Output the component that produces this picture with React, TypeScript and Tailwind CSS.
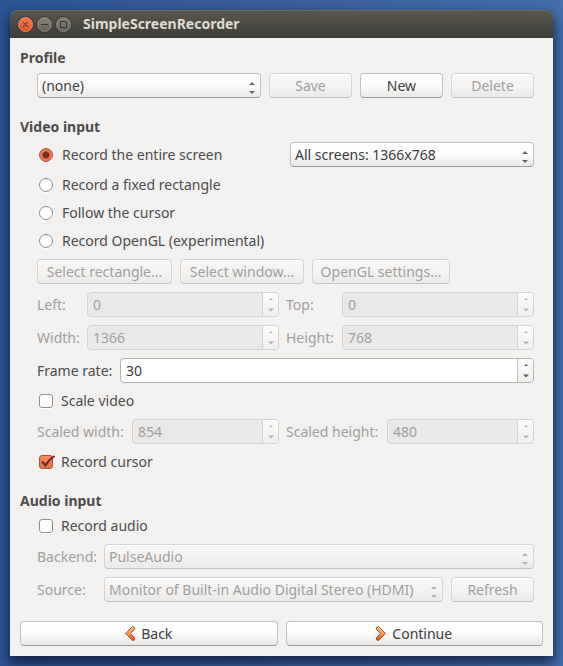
import React, { useId, useState } from "react";
import type { ReactNode } from "react";

function Arrows() {
  return (
    <svg width="8" height="14" viewBox="0 0 8 14" fill="currentColor" aria-hidden="true">
      <path d="M1 5L4 2L7 5Z" />
      <path d="M1 11L4 14L7 11Z" />
    </svg>
  );
}

const heading = "text-sm leading-5 font-bold text-[#4c4c4c]";

const raised =
  "h-[25px] rounded border border-[#c3c1be] border-b-[#9c9a97] bg-linear-to-b from-white via-[#fbfbfb] to-[#e9e8e6] text-[#3c3c3c] shadow-[inset_0_1px_0_#fff] disabled:border-[#d5d3d0] disabled:border-b-[#c4c2bf] disabled:from-[#f7f6f5] disabled:via-[#f4f3f2] disabled:to-[#eceae9] disabled:text-[#a09f9e]";

function Button({
  children,
  disabled,
  className = "",
}: {
  children: ReactNode;
  disabled?: boolean;
  className?: string;
}) {
  return (
    <button
      type="button"
      disabled={disabled}
      className={`${raised} flex shrink-0 items-center justify-center gap-1.5 whitespace-nowrap ${className}`}
    >
      {children}
    </button>
  );
}

function Combo({
  id,
  label,
  value,
  disabled,
  className = "",
}: {
  id?: string;
  label?: string;
  value: string;
  disabled?: boolean;
  className?: string;
}) {
  return (
    <div className={`relative min-w-0 ${className}`}>
      <select
        id={id}
        aria-label={label}
        disabled={disabled}
        className={`${raised} block w-full appearance-none truncate pr-5 pl-1 leading-5 opacity-100`}
      >
        <option>{value}</option>
      </select>
      <span
        className={`pointer-events-none absolute top-[7px] right-[5px] ${disabled ? "text-[#b3b2b1]" : "text-[#666564]"}`}
      >
        <svg className="block" width="8" height="14" viewBox="0 0 8 14" fill="currentColor" aria-hidden="true">
          <path d="M1 5L4 2L7 5Z" />
          <path d="M1 11L4 14L7 11Z" />
        </svg>
      </span>
    </div>
  );
}

function Spin({
  label,
  value,
  disabled,
  labelClass = "",
}: {
  label: string;
  value: string;
  disabled?: boolean;
  labelClass?: string;
}) {
  const id = useId();
  const [text, setText] = useState(value);
  const step = (by: number) => setText(String(Number(text) + by));
  return (
    <div className="flex min-w-0 flex-auto items-center gap-[7px]">
      <label
        htmlFor={id}
        className={`shrink-0 whitespace-nowrap ${disabled ? "text-[#a09f9e]" : ""} ${labelClass}`}
      >
        {label}
      </label>
      <div
        className={`flex h-[25px] min-w-0 flex-1 overflow-hidden rounded border ${
          disabled
            ? "border-[#d4d2cf] bg-[#eae9e8] text-[#a09f9e]"
            : "border-[#b5b1ab] bg-white text-[#3c3c3c]"
        }`}
      >
        <input
          id={id}
          type="text"
          inputMode="numeric"
          disabled={disabled}
          value={text}
          onChange={(e) => setText(e.target.value)}
          className="w-0 min-w-0 flex-1 bg-transparent px-[5px] outline-none"
        />
        <div
          className={`flex w-4 flex-col items-center border-l bg-linear-to-b from-[#fbfbfa] to-[#efeeed] ${
            disabled ? "border-[#d4d2cf] text-[#b3b2b1]" : "border-[#c4c1bd] text-[#5c5b5a]"
          }`}
        >
          <button
            type="button"
            aria-label={`Increase ${label}`}
            disabled={disabled}
            onClick={() => step(1)}
            className="flex w-full flex-1 items-center justify-center"
          >
            <svg width="8" height="4" viewBox="0 0 8 4" fill="currentColor" aria-hidden="true">
              <path d="M2 3L4 1L6 3Z" />
            </svg>
          </button>
          <button
            type="button"
            aria-label={`Decrease ${label}`}
            disabled={disabled}
            onClick={() => step(-1)}
            className="flex w-full flex-1 items-center justify-center"
          >
            <svg width="8" height="4" viewBox="0 0 8 4" fill="currentColor" aria-hidden="true">
              <path d="M1 0.5H7L4 3.5Z" />
            </svg>
          </button>
        </div>
      </div>
    </div>
  );
}

function Radio({ label, defaultChecked }: { label: string; defaultChecked?: boolean }) {
  return (
    <label className="flex h-5 items-center gap-[9px] pl-0.5 whitespace-nowrap">
      <input
        type="radio"
        name="area"
        defaultChecked={defaultChecked}
        className="size-3.5 shrink-0 appearance-none rounded-full border border-[#8f8d8a] bg-white shadow-[0_1px_0_#fff] checked:border-[#a8502f] checked:bg-[radial-gradient(circle,#6d3523_0_3px,#f0794f_4px)]"
      />
      {label}
    </label>
  );
}

function Check({ label, defaultChecked }: { label: string; defaultChecked?: boolean }) {
  return (
    <label className="flex h-5 items-center gap-2 pl-0.5 whitespace-nowrap">
      <span className="relative size-3.5 shrink-0">
        <input
          type="checkbox"
          defaultChecked={defaultChecked}
          className="peer block size-3.5 appearance-none rounded-[3px] border border-[#8f8d8a] bg-white shadow-[0_1px_0_#fff] checked:border-[#a8502f] checked:bg-linear-to-b checked:from-[#f58a62] checked:to-[#ec7044]"
        />
        <svg
          className="pointer-events-none absolute top-0 left-0 hidden overflow-visible peer-checked:block"
          width="16"
          height="14"
          viewBox="0 0 16 14"
          fill="none"
          stroke="#5f3023"
          aria-hidden="true"
        >
          <path d="M3 6.5L6.5 10.5Q9.5 5 15.5 1" strokeWidth="2" />
        </svg>
      </span>
      {label}
    </label>
  );
}

function Chevron({ flip = false }: { flip?: boolean }) {
  return (
    <svg width="10" height="16" viewBox="0 0 10 16" aria-hidden="true">
      <defs>
        <linearGradient id={flip ? "next" : "prev"} x1="0" y1="0" x2="0" y2="1">
          <stop offset="0" stopColor="#f3bd78" />
          <stop offset="0.5" stopColor="#f09a60" />
          <stop offset="1" stopColor="#e9421c" />
        </linearGradient>
      </defs>
      <path
        d={
          flip
            ? "M0.5 1.5L2.5 0.5L9.5 7.5L2.5 14.5L0.5 14V11.5L4.5 7.5L0.5 3.5Z"
            : "M9.5 1.5L7.5 0.5L0.5 7.5L7.5 14.5L9.5 14V11.5L5.5 7.5L9.5 3.5Z"
        }
        fill={flip ? "url(#next)" : "url(#prev)"}
        stroke="#c65322"
        strokeLinejoin="round"
      />
    </svg>
  );
}

function Title({ children, className, label }: { children: ReactNode; className: string; label: string }) {
  return (
    <button
      type="button"
      aria-label={label}
      className={`flex size-[15px] items-center justify-center rounded-full border shadow-[0_0_0_1px_#3b3a36] ${className}`}
    >
      <svg width="9" height="9" viewBox="0 0 9 9" fill="none" stroke="#3a3833" aria-hidden="true">
        {children}
      </svg>
    </button>
  );
}

export default function App() {
  return (
    <div className="min-h-screen bg-linear-to-r from-[#2c5493] via-[#3b6099] to-[#4470ae] p-2.5 font-['Noto_Sans','Open_Sans',sans-serif] text-sm leading-5 text-[#4c4c4c]">
      <div className="rounded-t-lg shadow-[0_6px_12px_2px_rgba(10,20,45,0.7)]">
        <header className="flex h-7 items-center gap-1 rounded-t-lg bg-linear-to-b from-[#5a584f] to-[#3d3c38] pl-2 shadow-[inset_0_1px_0_#6c6a60]">
          <Title label="Close" className="border-[#f08a62] bg-linear-to-b from-[#f37a4c] to-[#e2521f]">
            <path d="M2 2L7 7M7 2L2 7" />
          </Title>
          <Title label="Minimize" className="border-[#8a8982] bg-linear-to-b from-[#858379] to-[#65635c]">
            <path d="M1 4.5H8" />
          </Title>
          <Title label="Maximize" className="border-[#8a8982] bg-linear-to-b from-[#858379] to-[#65635c]">
            <path d="M1.5 1.5H7.5V7.5H1.5Z" />
          </Title>
          <h1 className="ml-2 text-sm leading-5 font-bold text-[#dfdbd2]">SimpleScreenRecorder</h1>
        </header>

        <main className="flex flex-col gap-[19px] bg-[#f2f1f0] p-2.5">
          <section className="flex flex-col gap-[5px]">
            <h2 className={heading}>Profile</h2>
            <div className="flex gap-2 pr-[9px] pl-[17px]">
              <Combo label="Profile" value="(none)" className="flex-1" />
              <Button disabled className="w-[83px]">Save</Button>
              <Button className="w-[83px]">New</Button>
              <Button disabled className="w-[83px]">Delete</Button>
            </div>
          </section>

          <section className="flex flex-col gap-[5px]">
            <h2 className={heading}>Video input</h2>
            <div className="flex flex-col gap-2 pr-[9px] pl-[17px]">
              <div className="flex items-center justify-between">
                <Radio label="Record the entire screen" defaultChecked />
                <Combo label="Screen" value="All screens: 1366x768" className="w-[244px]" />
              </div>
              <Radio label="Record a fixed rectangle" />
              <Radio label="Follow the cursor" />
              <Radio label="Record OpenGL (experimental)" />
              <div className="flex gap-2">
                <Button disabled className="w-[135px]">Select rectangle...</Button>
                <Button disabled className="w-[124px]">Select window...</Button>
                <Button disabled className="w-[138px]">OpenGL settings...</Button>
              </div>
              <div className="flex gap-[7px]">
                <Spin label="Left:" value="0" disabled labelClass="w-[43px]" />
                <Spin label="Top:" value="0" disabled labelClass="w-[49px]" />
              </div>
              <div className="flex gap-[7px]">
                <Spin label="Width:" value="1366" disabled labelClass="w-[43px]" />
                <Spin label="Height:" value="768" disabled labelClass="w-[49px]" />
              </div>
              <Spin label="Frame rate:" value="30" labelClass="w-[76px]" />
              <Check label="Scale video" />
              <div className="flex gap-[7px]">
                <Spin label="Scaled width:" value="854" disabled labelClass="w-[88px]" />
                <Spin label="Scaled height:" value="480" disabled labelClass="w-[94px]" />
              </div>
              <Check label="Record cursor" defaultChecked />
            </div>
          </section>

          <section className="flex flex-col gap-[5px]">
            <h2 className={heading}>Audio input</h2>
            <div className="flex flex-col gap-2 pr-[9px] pl-[17px]">
              <Check label="Record audio" />
              <div className="flex items-center gap-[7px]">
                <label htmlFor="backend" className="w-[60px] shrink-0 text-[#a09f9e]">Backend:</label>
                <Combo id="backend" value="PulseAudio" disabled className="flex-1" />
              </div>
              <div className="flex items-center gap-[7px]">
                <label htmlFor="source" className="w-[60px] shrink-0 text-[#a09f9e]">Source:</label>
                <div className="flex min-w-0 flex-1 gap-2">
                  <Combo
                    id="source"
                    value="Monitor of Built-in Audio Digital Stereo (HDMI)"
                    disabled
                    className="flex-1"
                  />
                  <Button disabled className="w-[83px]">Refresh</Button>
                </div>
              </div>
            </div>
          </section>

          <nav className="grid grid-cols-2 gap-2">
            <Button>
              <Chevron />
              Back
            </Button>
            <Button>
              <Chevron flip />
              Continue
            </Button>
          </nav>
        </main>
      </div>
    </div>
  );
}
